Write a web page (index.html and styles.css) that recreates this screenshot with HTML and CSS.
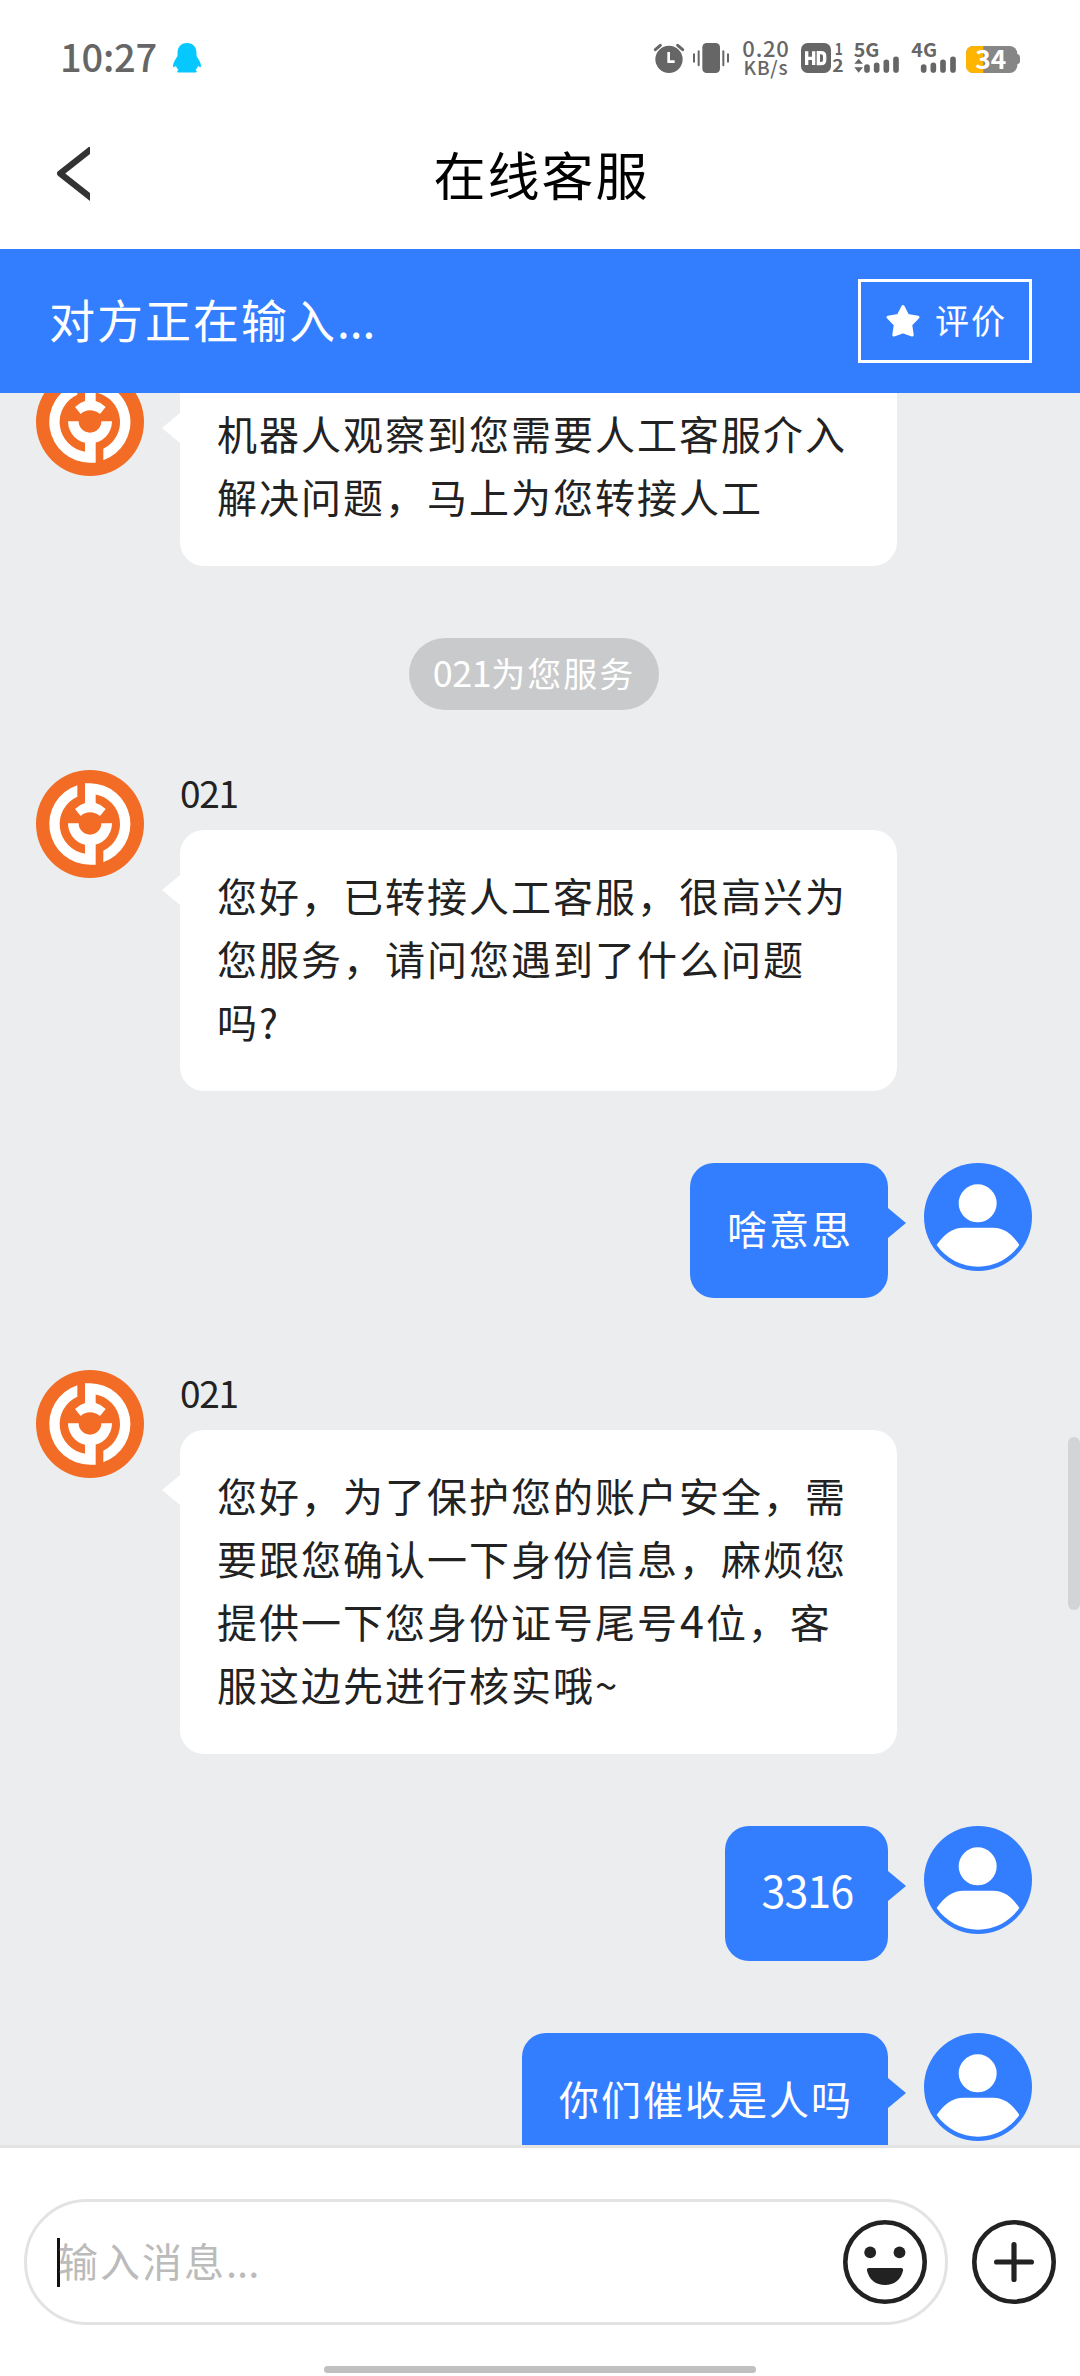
FILE: index.html
```html
<!DOCTYPE html>
<html lang="zh-CN">
<head>
<meta charset="utf-8">
<title>在线客服</title>
<link rel="stylesheet" href="styles.css">
</head>
<body>
<svg class="defs" aria-hidden="true">
  <symbol id="agent" viewBox="108 90 324 324">
    <circle cx="270" cy="252" r="162" fill="#f26c26"/>
    <g fill="#fff">
      <path d="M232 136A122 122 0 0 0 270 374H287V310H255V341A90 90 0 0 1 232 170Z"/>
      <path d="M255 130H270A122 122 0 0 1 310 367V332.6A90 90 0 0 0 287 163.6V195H255Z"/>
      <path d="M204 250A66 66 0 0 0 336 250H304A34 34 0 0 1 236 250Z"/>
      <path d="M225 207Q240 193 255 189H287Q303 193 317 207L300 228Q286 217 270 217Q254 217 242 228Z"/>
    </g>
  </symbol>
  <symbol id="user" viewBox="852 99 324 324">
    <circle cx="1014" cy="261" r="162" fill="#337dff"/>
    <circle cx="1013" cy="220" r="57" fill="#fff"/>
    <path fill="#fff" d="M890 345Q925 293 970 293H1060Q1105 293 1138 345A150.8 150.8 0 0 1 890 345Z"/>
  </symbol>
</svg>

<div class="screen">
  <div class="status">
    <span class="clock">10:27</span>
    <svg class="penguin" viewBox="0 0 28 30"><path fill="#06c8ff" d="M14 0C7.500 0 4.500 4.500 4.500 10v3C2.500 16 0 20 0 23c0 1.500 1 1.500 3 0 .6 1.800 1.500 3 2.600 4C4 27.500 3.500 29.500 6 29.500h16c2.500 0 2-2 .4-2.500 1.100-1 2-2.200 2.600-4 2 1.500 3 1.500 3 0 0-3-2.500-7-4.500-10v-3C23.500 4.500 20.500 0 14 0Z"/></svg>
    <div class="indicators">
      <svg width="37" height="45" viewBox="36 45 111 135">
        <circle cx="87" cy="118" r="41"/>
        <path class="line" stroke-width="9" d="M46 89L61 76M128 89L113 76"/>
        <path fill="none" stroke="#fff" stroke-width="8" d="M86 96V125H104"/>
      </svg>
      <svg width="46" height="45" viewBox="147 45 138 135">
        <rect x="187" y="69" width="53" height="90" rx="13"/>
        <path class="line" stroke-width="6" d="M162 103V125M176 94V136M250 94V136M264 103V125"/>
      </svg>
      <span class="speed"><b>0.20</b><i>KB/s</i></span>
      <svg width="50" height="45" viewBox="471 45 150 135">
        <rect x="483" y="69" width="90" height="90" rx="20"/>
        <path fill="none" stroke="#fff" stroke-width="10" d="M500 94V135M521 94V135M500 115H521M535 98H543Q554 98 554 108V121Q554 131 543 131H535Z"/>
        <text x="584" y="105" font-size="48" textLength="24" lengthAdjust="spacingAndGlyphs">1</text>
        <text x="577" y="157" font-size="50" textLength="34" lengthAdjust="spacingAndGlyphs">2</text>
      </svg>
      <svg width="57" height="45" viewBox="621 45 171 135">
        <text x="641" y="110" font-size="56" textLength="77" lengthAdjust="spacingAndGlyphs">5G</text>
        <path d="M656 116L669 131H643ZM656 158L669 142H643Z"/>
        <path class="line" stroke-width="17" d="M681 141V150M710 136V150M739 127V150M768 118V150"/>
      </svg>
      <svg width="56" height="45" viewBox="792 45 168 135">
        <text x="814" y="110" font-size="56" textLength="77" lengthAdjust="spacingAndGlyphs">4G</text>
        <path class="line" stroke-width="17" d="M851 141V150M880 136V150M909 127V150M939 118V150"/>
      </svg>
      <svg width="61" height="45" viewBox="960 45 183 135">
        <rect x="978" y="78" width="154" height="81" rx="23" fill="#868686"/>
        <path fill="#868686" d="M1130 102Q1140 103 1140 112V124Q1140 132 1130 133Z"/>
        <path fill="#ffb400" d="M1030 78H1001Q978 78 978 101V136Q978 159 1001 159H1030Z"/>
        <text class="level" x="1006" y="147" font-size="75" textLength="93" lengthAdjust="spacingAndGlyphs">34</text>
      </svg>
    </div>
  </div>

  <div class="header">
    <svg class="back" viewBox="0 0 33 54"><path fill="none" stroke="#333" stroke-width="6.200" stroke-linejoin="round" d="M38 -1L3.200 26.500L38 54"/></svg>
    <h1>在线客服</h1>
  </div>

  <div class="banner">
    <span class="typing">对方正在输入<span class="dots">...</span></span>
    <div class="rate">
      <svg width="36" height="34" viewBox="0 0 36 34"><path fill="#fff" stroke="#fff" stroke-width="3" stroke-linejoin="round" d="M18 2.500L22.600 11.400L33 13.200L25.700 20.600L27.200 31L18 27.800L8.800 31L10.300 20.600L3 13.200L13.400 11.400Z"/></svg>
      <span>评价</span>
    </div>
  </div>

  <div class="chat">
    <div class="messages">
      <div class="msg agent">
        <svg class="avatar"><use href="#agent"/></svg>
        <div class="bubble">机器人观察到您需要人工客服介入解决问题，马上为您转接人工</div>
      </div>
      <div class="notice"><span class="num">021</span>为您服务</div>
      <div class="msg agent">
        <svg class="avatar"><use href="#agent"/></svg>
        <div class="body">
          <div class="name">021</div>
          <div class="bubble">您好，已转接人工客服，很高兴为您服务，请问您遇到了什么问题吗?</div>
        </div>
      </div>
      <div class="msg user">
        <div class="bubble">啥意思</div>
        <svg class="avatar"><use href="#user"/></svg>
      </div>
      <div class="msg agent">
        <svg class="avatar"><use href="#agent"/></svg>
        <div class="body">
          <div class="name">021</div>
          <div class="bubble">您好，为了保护您的账户安全，需要跟您确认一下身份信息，麻烦您提供一下您身份证号尾号<span class="digit">4</span>位，客服这边先进行核实哦~</div>
        </div>
      </div>
      <div class="msg user">
        <div class="bubble"><span class="num">3316</span></div>
        <svg class="avatar"><use href="#user"/></svg>
      </div>
      <div class="msg user">
        <div class="bubble">你们催收是人吗</div>
        <svg class="avatar"><use href="#user"/></svg>
      </div>
    </div>
    <div class="scrollbar"></div>
  </div>

  <div class="composer">
    <div class="field">
      <span class="caret"></span>
      <span class="placeholder">输入消息<span class="dots">...</span></span>
      <svg width="84" height="84" viewBox="0 0 84 84">
        <circle cx="42" cy="42" r="39.700" fill="none" stroke="#222" stroke-width="4.600"/>
        <circle cx="27.200" cy="32.400" r="5.900" fill="#222"/><circle cx="56.500" cy="32.400" r="5.900" fill="#222"/>
        <path fill="#222" d="M26 48H58Q60.500 48 60 50.500C58 60 51 65 42 65S26 60 24 50.500Q23.500 48 26 48Z"/>
      </svg>
    </div>
    <svg width="84" height="84" viewBox="0 0 84 84">
      <circle cx="42" cy="42" r="39.700" fill="none" stroke="#222" stroke-width="4.600"/>
      <path fill="none" stroke="#222" stroke-width="5.200" stroke-linecap="round" d="M24.600 42H59.400M42 24.600V59.400"/>
    </svg>
  </div>
  <div class="home"></div>
</div>
</body>
</html>
```
FILE: styles.css
```css
* { box-sizing: border-box; margin: 0; padding: 0; }

body {
  width: 1080px;
  height: 2376px;
  overflow: hidden;
  background: #fff;
  font-family: "Noto Sans CJK SC", sans-serif;
}

svg { display: block; flex: none; }
.defs { position: absolute; width: 0; height: 0; }

.screen {
  display: flex;
  flex-direction: column;
  width: 1080px;
  height: 2376px;
}

.status {
  display: flex;
  align-items: center;
  flex: none;
  height: 115px;
  padding: 0 59px 0 60px;
  color: #666;
}
.clock {
  width: 113px;
  padding-bottom: 5px;
  font-size: 38px;
  font-weight: 500;
  letter-spacing: -0.2px;
}
.penguin { width: 28px; height: 30px; }
.indicators {
  display: flex;
  align-items: center;
  margin-left: auto;
}
.indicators svg { fill: #666; font-weight: 700; }
.indicators .line { fill: none; stroke: #666; stroke-linecap: round; }
.indicators .level { fill: #fff; }
.speed {
  display: flex;
  flex-direction: column;
  align-items: center;
  width: 62px;
  padding-bottom: 2px;
}
.speed b, .speed i {
  font-style: normal;
  font-weight: 500;
  font-size: 22px;
  line-height: 19px;
  letter-spacing: 0.8px;
}
.speed i { font-size: 19px; }

.header {
  display: flex;
  align-items: center;
  flex: none;
  height: 134px;
  padding: 0 57px 17px;
}
.back { width: 33px; height: 54px; }
.header h1 {
  flex: 1;
  padding-right: 30px;
  text-align: center;
  font-size: 52px;
  font-weight: 400;
  line-height: 70px;
  letter-spacing: 2px;
  color: #000;
}

.banner {
  display: flex;
  align-items: center;
  justify-content: space-between;
  flex: none;
  height: 144px;
  padding: 0 48px 0 49px;
  background: #337dff;
  color: #fff;
}
.typing {
  padding-bottom: 6px;
  font-size: 46px;
  letter-spacing: 2px;
}
.dots { letter-spacing: 0; }
.rate {
  display: flex;
  align-items: center;
  width: 174px;
  height: 84px;
  padding-left: 24px;
  border: 3px solid #fff;
}
.rate span {
  margin-left: 14px;
  padding-bottom: 4px;
  font-size: 34px;
  letter-spacing: 2px;
}

.chat {
  position: relative;
  flex: none;
  height: 1752px;
  overflow: hidden;
  background: #ebedee;
}
.messages {
  display: flex;
  flex-direction: column;
  margin-top: -25px;
  padding: 0 48px 0 36px;
}
.msg {
  display: flex;
  align-items: flex-start;
  gap: 36px;
  margin-bottom: 72px;
}
.user { justify-content: flex-end; }
.avatar { width: 108px; height: 108px; }
.name {
  height: 60px;
  font-size: 37px;
  line-height: 44px;
  letter-spacing: -1.3px;
  color: #222;
}
.bubble {
  position: relative;
  padding: 34px 35px 38px 37px;
  border-radius: 24px;
  font-size: 40px;
  line-height: 63px;
  letter-spacing: 2px;
}
.agent .bubble {
  width: 717px;
  background: #fff;
  color: #222;
}
.user .bubble {
  background: #337dff;
  color: #fff;
}
.bubble::after {
  content: "";
  position: absolute;
  top: 45px;
  width: 18px;
  height: 30px;
  background: inherit;
}
.agent .bubble::after { left: -18px; clip-path: polygon(100% 0, 100% 100%, 0 50%); }
.user .bubble::after { right: -18px; clip-path: polygon(0 0, 0 100%, 100% 50%); }
.bubble .num, .digit { font-size: 43px; line-height: 1; letter-spacing: -1px; }
.digit { margin: 0 2px 0 1px; letter-spacing: 0; }

.notice {
  align-self: center;
  height: 72px;
  margin: 0 0 60px;
  padding: 0 24px;
  border-radius: 36px;
  background: #c9cacb;
  color: #fff;
  font-size: 34px;
  line-height: 70px;
  letter-spacing: 2px;
}
.notice .num { font-size: 36px; line-height: 1; letter-spacing: -0.5px; }

.scrollbar {
  position: absolute;
  top: 1044px;
  right: 0;
  width: 12px;
  height: 173px;
  border-radius: 6px;
  background: #d3d4d5;
}

.composer {
  display: flex;
  align-items: center;
  gap: 24px;
  flex: none;
  height: 221px;
  padding: 51px 24px 41px;
  border-top: 3px solid #e3e3e3;
}
.field {
  display: flex;
  align-items: center;
  flex: 1;
  height: 126px;
  padding: 0 18px 0 30px;
  border: 3px solid #e3e3e3;
  border-radius: 63px;
}
.caret { width: 3px; height: 49px; background: #111; }
.placeholder {
  flex: 1;
  margin-left: -2px;
  padding-bottom: 5px;
  font-size: 40px;
  line-height: 60px;
  letter-spacing: 2px;
  color: #bbb;
}
.home {
  align-self: center;
  flex: none;
  width: 432px;
  height: 7px;
  border-radius: 4px;
  background: #c0c0c0;
}
```
